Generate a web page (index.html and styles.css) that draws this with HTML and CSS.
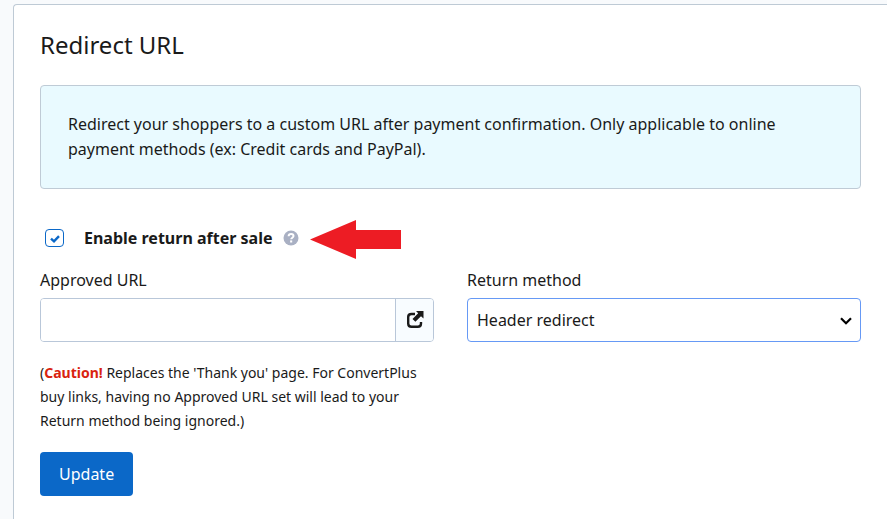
FILE: index.html
```html
<!DOCTYPE html>
<html lang="en">
<head>
<meta charset="utf-8">
<title>Redirect URL</title>
<link rel="stylesheet" href="styles.css">
</head>
<body>
<main class="card">
  <h1 class="title">Redirect URL</h1>
  <p class="notice">Redirect your shoppers to a custom URL after payment confirmation. Only applicable to online payment methods (ex: Credit cards and PayPal).</p>
  <form class="form">
    <div class="toggle">
      <span class="check">
        <input class="check-input" type="checkbox" id="enable" checked>
        <svg class="check-mark" viewBox="0 0 10 8" width="10" height="8" aria-hidden="true"><path d="M1 3.600l3 2.700L9 1.200" fill="none" stroke="#0b68c8" stroke-width="2.400"/></svg>
      </span>
      <label class="toggle-label" for="enable">Enable return after sale</label>
      <svg class="help" viewBox="0 0 16 16" width="16" height="16" aria-hidden="true"><circle cx="8" cy="8" r="7.500" fill="#a9b0c3"/><path d="M5.600 6.200C5.700 4.700 6.700 4 8.100 4c1.400 0 2.400.8 2.400 2 0 1.700-2.300 1.700-2.300 3.300" fill="none" stroke="#fff" stroke-width="2"/><path d="M7.100 10.400h2.100v2.100H7.100z" fill="#fff"/></svg>
      <svg class="arrow" viewBox="0 0 92 42" width="92" height="42" aria-hidden="true"><path d="M0 22.500L46 3v10h45v19H46v10z" fill="#ed1c24"/></svg>
    </div>
    <div class="fields">
      <div class="field">
        <label class="label" for="url">Approved URL</label>
        <div class="url-group">
          <input class="url-input" type="text" id="url">
          <button class="open" type="button" aria-label="Open URL">
            <svg viewBox="0 0 18 18" width="18" height="18" aria-hidden="true"><path d="M9 3H5.500C3.500 3 2.200 4 2.200 6v6.500c0 2 1.300 3.300 3.300 3.300h6.300c2 0 3.200-1.300 3.200-3.300V11" fill="none" stroke="#1a1a1a" stroke-width="2.400"/><path d="M10 0h7.500v7.500L15 5.200l-5.600 5.600-2.900-2.900 5.700-5.700z" fill="#1a1a1a"/></svg>
          </button>
        </div>
        <p class="hint">(<strong class="caution">Caution!</strong> Replaces the 'Thank you' page. For ConvertPlus buy links, having no Approved URL set will lead to your Return method being ignored.)</p>
      </div>
      <div class="field">
        <label class="label" for="method">Return method</label>
        <div class="select-wrap">
          <select class="select" id="method"><option>Header redirect</option></select>
          <svg class="chevron" viewBox="0 0 12 8" width="12" height="8" aria-hidden="true"><path d="M1 1.200l5 5 5-5" fill="none" stroke="#000" stroke-width="2.200"/></svg>
        </div>
      </div>
    </div>
    <button class="update" type="button">Update</button>
  </form>
</main>
</body>
</html>
```
FILE: styles.css
```css
* {
  box-sizing: border-box;
}

body {
  margin: 0;
  padding: 4px 0 0 13px;
  background: #f8fafc;
  color: #1a1a1a;
  font: 16px/25px "Noto Sans", sans-serif;
}

.card {
  min-height: calc(100vh - 4px);
  padding: 24px 26px 23px;
  background: #fff;
  border: solid #becad5;
  border-width: 1px 0 0 1px;
  border-radius: 4px 0 0 0;
}

.title {
  margin: 0 0 24px;
  font-size: 24px;
  font-weight: 400;
  line-height: 32px;
}

.notice {
  margin: 0 0 36px;
  padding: 26px 27px;
  background: #e9faff;
  border: 1px solid #bfcbd6;
  border-radius: 4px;
}

.toggle {
  display: flex;
  align-items: center;
  height: 26px;
  margin-bottom: 17px;
  padding-left: 5px;
}

.check {
  position: relative;
  display: flex;
  margin-right: 20px;
}

.check-input {
  appearance: none;
  width: 19px;
  height: 18px;
  margin: 0;
  background: #fff;
  border: 1px solid #0b68c8;
  border-radius: 4px;
}

.check-mark {
  position: absolute;
  top: 6px;
  left: 5px;
  pointer-events: none;
}

.toggle-label {
  font-weight: 700;
}

.help {
  margin-left: 10px;
}

.arrow {
  flex: none;
  margin-left: 11px;
}

.fields {
  display: grid;
  grid-template-columns: 1fr 1fr;
  gap: 33px;
}

.label {
  display: block;
  margin-bottom: 5px;
}

.url-group {
  display: flex;
  height: 44px;
  overflow: hidden;
  border: 1px solid #b9c7d9;
  border-radius: 4px;
}

.url-input {
  flex: 1;
  min-width: 0;
  padding: 0 9px;
  background: #fff;
  border: 0;
  font: inherit;
}

.open {
  display: flex;
  align-items: center;
  justify-content: center;
  width: 38px;
  padding: 0;
  background: #f8fcff;
  border: 0;
  border-left: 1px solid #b9c7d9;
}

.hint {
  margin: 19px 0;
  font-size: 14px;
  line-height: 24px;
}

.caution {
  color: #d9230f;
}

.select-wrap {
  position: relative;
}

.select {
  appearance: none;
  display: block;
  width: 100%;
  height: 44px;
  padding: 0 32px 0 9px;
  background: #fff;
  border: 1px solid #6699f5;
  border-radius: 4px;
  color: inherit;
  font: inherit;
}

.chevron {
  position: absolute;
  top: 19px;
  right: 9px;
  pointer-events: none;
}

.update {
  display: block;
  height: 44px;
  padding: 0 19px;
  background: #0b68c8;
  border: 0;
  border-radius: 4px;
  color: #fff;
  font: inherit;
}
```
